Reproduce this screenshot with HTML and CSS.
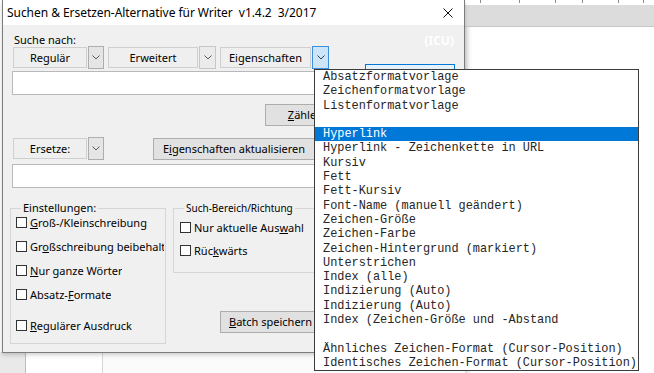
FILE: index.html
```html
<!DOCTYPE html>
<html lang="de">
<head>
<meta charset="utf-8">
<title>Suchen &amp; Ersetzen</title>
<link rel="stylesheet" href="styles.css">
</head>
<body>
<div class="desktop">
  <div class="ruler">
    <div class="ruler-top">
      <i class="tick t1"></i><i class="tick t2"></i><i class="tick t3"></i><i class="tick t4"></i><i class="tick t5"></i><i class="tick t6"></i>
    </div>
    <div class="ruler-bar"></div>
  </div>
  <div class="doc-shadow"></div>
  <div class="bottom-strip">
    <div class="bs-gray"></div>
    <div class="bs-page"></div>
    <div class="bs-rest"></div>
  </div>

  <div class="dialog">
    <div class="titlebar">
      <span class="title">Suchen &amp; Ersetzen-Alternative für Writer&nbsp; v1.4.2&nbsp; 3/2017</span>
      <svg class="close" width="10" height="10" viewBox="0 0 10 10"><path d="M0.5 0.5 L9.5 9.5 M9.5 0.5 L0.5 9.5" stroke="#111" stroke-width="1" fill="none"/></svg>
    </div>
    <div class="dbody">
      <div class="maincol">
        <div class="lbl">Suche nach:</div>
        <div class="row r1">
          <div class="combo">
            <span class="cbtn w-reg">Regulär</span>
            <span class="chev dark"><svg width="8" height="5" viewBox="0 0 8 5"><path d="M0.5 0.5 L4 4 L7.5 0.5" stroke="#5a5a5a" fill="none"/></svg></span>
          </div>
          <div class="combo">
            <span class="cbtn w-erw">Erweitert</span>
            <span class="chev light"><svg width="8" height="5" viewBox="0 0 8 5"><path d="M0.5 0.5 L4 4 L7.5 0.5" stroke="#5a5a5a" fill="none"/></svg></span>
          </div>
          <div class="combo">
            <span class="cbtn w-eig">Eigenschaften</span>
            <span class="chev active"><svg width="8" height="5" viewBox="0 0 8 5"><path d="M0.5 0.5 L4 4 L7.5 0.5" stroke="#3a3a3a" fill="none"/></svg></span>
          </div>
        </div>
        <div class="field"></div>
        <div class="row r-count">
          <span class="btn btn-count"><u>Z</u>ähle</span>
        </div>
        <div class="row r-rep">
          <div class="combo">
            <span class="cbtn w-reg">Ersetze:</span>
            <span class="chev dark"><svg width="8" height="5" viewBox="0 0 8 5"><path d="M0.5 0.5 L4 4 L7.5 0.5" stroke="#5a5a5a" fill="none"/></svg></span>
          </div>
          <span class="btn btn-upd">E<u>i</u>genschaften aktualisieren</span>
        </div>
        <div class="field field2"></div>
        <div class="groups">
          <fieldset class="grp grp1">
            <legend>Einstellungen:</legend>
            <label class="chk c1"><span class="box"></span><span class="ctext"><u>G</u>roß-/Kleinschreibung</span></label>
            <label class="chk"><span class="box"></span><span class="ctext">Gr<u>o</u>ßschreibung beibehalten</span></label>
            <label class="chk"><span class="box"></span><span class="ctext"><u>N</u>ur ganze Wörter</span></label>
            <label class="chk"><span class="box"></span><span class="ctext">Absatz-<u>F</u>ormate</span></label>
            <label class="chk c5"><span class="box"></span><span class="ctext"><u>R</u>egulärer Ausdruck</span></label>
          </fieldset>
          <div class="gcol2">
            <fieldset class="grp grp2">
              <legend>Such-Bereich/Richtung</legend>
              <label class="chk c1b"><span class="box"></span><span>Nur aktuelle Aus<u>w</u>ahl</span></label>
              <label class="chk c2b"><span class="box"></span><span>Rüc<u>k</u>wärts</span></label>
            </fieldset>
            <span class="btn btn-batch"><u>B</u>atch speichern</span>
          </div>
        </div>
      </div>
      <div class="sidecol">
        <div class="icu">(ICU)</div>
        <div class="btn btn-focus"></div>
      </div>
    </div>
  </div>

  <ul class="dropdown">
    <li>Absatzformatvorlage</li>
    <li>Zeichenformatvorlage</li>
    <li>Listenformatvorlage</li>
    <li>&nbsp;</li>
    <li class="sel">Hyperlink</li>
    <li>Hyperlink - Zeichenkette in URL</li>
    <li>Kursiv</li>
    <li>Fett</li>
    <li>Fett-Kursiv</li>
    <li>Font-Name (manuell geändert)</li>
    <li>Zeichen-Größe</li>
    <li>Zeichen-Farbe</li>
    <li>Zeichen-Hintergrund (markiert)</li>
    <li>Unterstrichen</li>
    <li>Index (alle)</li>
    <li>Indizierung (Auto)</li>
    <li>Indizierung (Auto)</li>
    <li>Index (Zeichen-Größe und -Abstand</li>
    <li>&nbsp;</li>
    <li>Ähnliches Zeichen-Format (Cursor-Position)</li>
    <li>Identisches Zeichen-Format (Cursor-Position)</li>
  </ul>
</div>
</body>
</html>
```

FILE: styles.css
```css
* { box-sizing: border-box; }
html, body { margin: 0; padding: 0; }
body {
  width: 654px;
  height: 373px;
  overflow: hidden;
  background: #ffffff;
  font-family: "Noto Sans", "Open Sans", sans-serif;
  font-size: 11px;
  color: #000;
}
.desktop {
  position: relative;
  width: 654px;
  height: 373px;
  overflow: hidden;
  background: #ffffff;
}

/* background document window */
.ruler {
  position: absolute;
  left: 465px;
  top: 0;
  width: 189px;
}
.ruler-top {
  height: 5px;
  background: #fff;
  position: relative;
}
.tick {
  position: absolute;
  top: 0;
  width: 1px;
  height: 3px;
  background: #8a8a8a;
}
.t1 { left: 15px; } .t2 { left: 54px; } .t3 { left: 90px; }
.t4 { left: 117px; } .t5 { left: 153px; } .t6 { left: 178px; }
.ruler-bar {
  height: 22px;
  background: #dcdcdc;
  border-bottom: 1px solid #c6c6c6;
}
.doc-shadow {
  position: absolute;
  left: 465px;
  top: 27px;
  width: 7px;
  height: 346px;
  background: linear-gradient(to right, #d8d8d8, #f6f6f6 70%, #ffffff);
}
.bottom-strip {
  position: absolute;
  left: 0;
  top: 352px;
  width: 465px;
  height: 21px;
  display: flex;
}
.bs-gray { width: 26px; background: #e9e9e9; border-right: 1px solid #bdbdbd; }
.bs-page { width: 77px; background: #ffffff; border-right: 1px solid #d6d6d6; }
.bs-rest { flex: 1; background: #fbfbfb; }

/* dialog window */
.dialog {
  position: absolute;
  left: 2px;
  top: 0;
  width: 463px;
  height: 353px;
  background: #f0f0f0;
  border: 1px solid #7c7c7c;
  border-top: none;
  box-shadow: 0 2px 4px rgba(0,0,0,0.18);
}
.titlebar {
  height: 25px;
  background: #ffffff;
  display: flex;
  align-items: center;
  justify-content: space-between;
  padding: 0 11px 1px 4px;
}
.title {
  font-size: 12px;
  white-space: nowrap;
  letter-spacing: -0.05px;
}
.close { display: block; margin-top: 1px; }

.dbody {
  display: flex;
  gap: 5px;
  padding: 0 8px 0 9px;
}
.maincol { width: 348px; display: flex; flex-direction: column; }
.sidecol { width: 90px; display: flex; flex-direction: column; align-items: flex-end; }

.lbl { margin-top: 7px; line-height: 15px; padding-left: 2px; }

.row { display: flex; align-items: center; }
.r1 { margin-top: -1px; height: 23px; padding-left: 1px; gap: 6px; }
.r1 .combo + .combo { margin-left: -2px; }
.combo { display: flex; align-items: center; gap: 1px; }

.cbtn {
  height: 21px;
  display: flex;
  align-items: center;
  justify-content: center;
  background: #efefef;
  border: 1px solid #cfcfcf;
  line-height: 1;
  padding-bottom: 1px;
}
.w-reg { width: 74px; }
.w-erw { width: 90px; }
.w-eig { width: 91px; }

.chev {
  width: 16px;
  height: 23px;
  display: flex;
  align-items: center;
  justify-content: center;
  border: 1px solid #adadad;
  background: #e5e5e5;
}
.chev svg { display: block; }
.chev.light { border-color: #c7c7c7; background: #ebebeb; width: 17px; }
.chev.active { border-color: #3d8ee0; background: #cde5f8; width: 17px; }

.field {
  margin-top: 2px;
  height: 24px;
  width: 348px;
  background: #ffffff;
  border: 1px solid #b9b9b9;
}
.field2 { margin-top: 4px; }

.btn {
  height: 22px;
  display: flex;
  align-items: center;
  justify-content: center;
  background: #e1e1e1;
  border: 1px solid #adadad;
  white-space: nowrap;
  padding-bottom: 1px;
}
.r-count { margin-top: 9px; }
.btn-count { margin-left: 253px; width: 74px; }
.r-rep { margin-top: 11px; height: 23px; padding-left: 1px; }
.btn-upd { margin-left: 49px; width: 162px; }

.groups {
  display: flex;
  margin-top: 13px;
  margin-left: -2px;
  gap: 7px;
  align-items: flex-start;
}
.grp {
  margin: 0;
  border: 1px solid #d5d5d5;
  padding: 0 0 0 5px;
  min-width: 0;
}
.grp legend {
  padding: 0 2px;
  margin-left: 5px;
  line-height: 14px;
}
.grp1 { width: 156px; height: 143px; }
.grp1 legend { font-size: 11px; }
.gcol2 { display: flex; flex-direction: column; }
.grp2 { width: 150px; height: 72px; }
.grp2 legend { font-size: 10px; }

.chk {
  display: flex;
  align-items: center;
  gap: 3px;
  height: 16px;
  white-space: nowrap;
  margin-top: 8px;
}
.ctext { display: block; max-width: 134px; overflow: hidden; }
.chk.c1 { margin-top: -1px; }
.chk.c5 { margin-top: 15px; }
.chk.c1b { margin-top: 4px; padding-left: 1px; }
.chk.c2b { margin-top: 7px; padding-left: 1px; }
.box {
  width: 11px;
  height: 11px;
  flex: none;
  background: #fff;
  border: 1px solid #333;
}
.btn-batch { margin-top: 38px; margin-left: 47px; width: 100px; justify-content: flex-start; padding-left: 8px; }

.icu {
  margin-top: 8px;
  line-height: 15px;
  color: #ffffff;
  font-weight: bold;
  font-size: 12px;
  margin-right: 1px;
}
.btn-focus {
  margin-top: 16px;
  width: 90px;
  height: 23px;
  border: 1px solid #0078d7;
  background: #e5f1fb;
}

/* dropdown list */
.dropdown {
  position: absolute;
  left: 314px;
  top: 69px;
  width: 325px;
  margin: 0;
  padding: 0;
  list-style: none;
  background: #ffffff;
  border: 1px solid #3c3c3c;
  font-family: "Liberation Mono", "Courier New", monospace;
  font-size: 11.9px;
  color: #262626;
}
.dropdown li {
  height: 14.3px;
  line-height: 14.3px;
  padding-left: 8px;
  white-space: nowrap;
}
.dropdown li.sel { background: #0078d7; color: #ffffff; }
```
